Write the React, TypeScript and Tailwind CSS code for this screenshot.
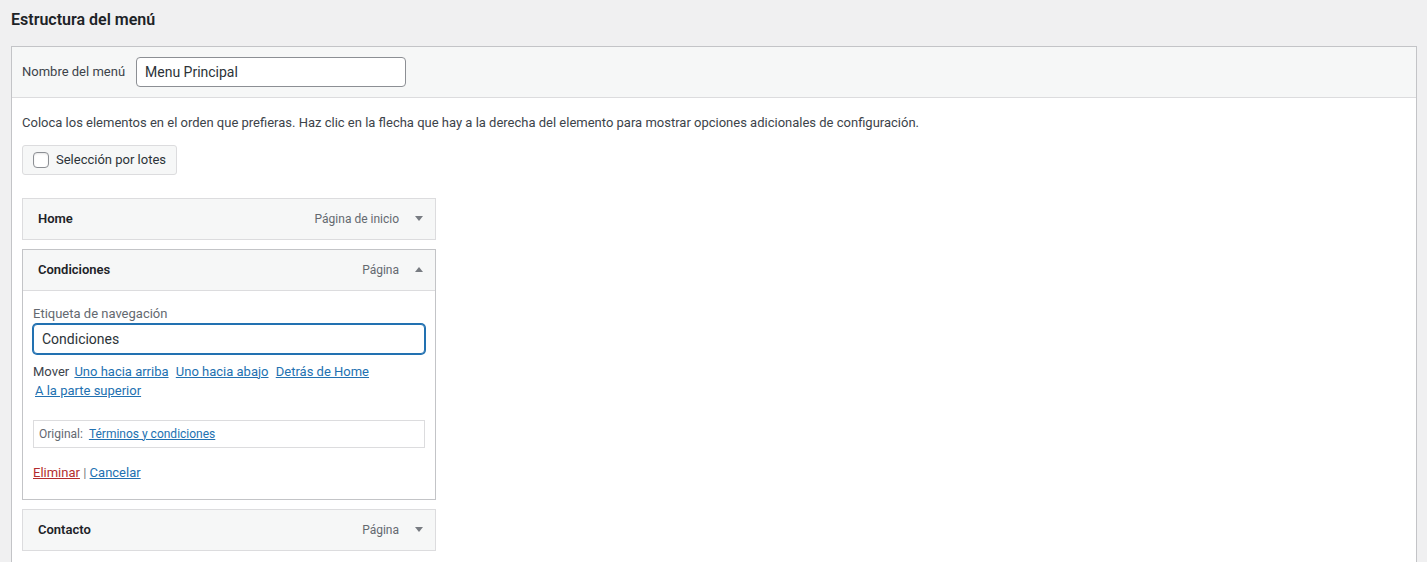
import { useState } from "react"

type Item = {
  id: string
  title: string
  type: string
}

const items: Item[] = [
  { id: "home", title: "Home", type: "Página de inicio" },
  { id: "condiciones", title: "Condiciones", type: "Página" },
  { id: "contacto", title: "Contacto", type: "Página" },
]

function Arrow({ up }: { up?: boolean }) {
  return (
    <svg width="8" height="5" viewBox="0 0 8 5" className="ml-[16px] shrink-0">
      {up ? <path d="M0 5 L4 0 L8 5 Z" fill="#787c82" /> : <path d="M0 0 L8 0 L4 5 Z" fill="#787c82" />}
    </svg>
  )
}

function ItemHeader({ item, open }: { item: Item; open: boolean }) {
  return (
    <div className="flex h-[40px] items-center justify-between pl-[15px] pr-[12px]">
      <span className="text-[13px] font-semibold text-[#1d2327]">{item.title}</span>
      <div className="flex items-center">
        <span className="text-[12px] text-[#646970]">{item.type}</span>
        <Arrow up={open} />
      </div>
    </div>
  )
}

function MoveLink({ children }: { children: React.ReactNode }) {
  return (
    <a href="#" className="mx-[2px] inline-block whitespace-nowrap text-[#2271b1] underline">
      {children}
    </a>
  )
}

function ItemSettings() {
  const [label, setLabel] = useState("Condiciones")

  return (
    <div className="px-[10px] pb-[16px] pt-[13px]">
      <label htmlFor="nav-label" className="block text-[13px] leading-[20px] text-[#646970]">
        Etiqueta de navegación
      </label>
      <input
        id="nav-label"
        value={label}
        onChange={(e) => setLabel(e.target.value)}
        className="block h-[30px] w-full rounded-[4px] border border-[#2271b1] bg-white px-[8px] text-[14px] text-[#2c3338] shadow-[0_0_0_1px_#2271b1] outline-none"
      />
      <p className="mt-[8px] text-[13px] leading-[19px] text-[#3c434a]">
        Mover <MoveLink>Uno hacia arriba</MoveLink> <MoveLink>Uno hacia abajo</MoveLink>{" "}
        <MoveLink>Detrás de Home</MoveLink> <MoveLink>A la parte superior</MoveLink>
      </p>
      <div className="mt-[20px] flex h-[28px] items-center border border-[#dcdcde] px-[5px] text-[12px] text-[#646970]">
        Original:
        <a href="#" className="ml-[6px] text-[#2271b1] underline">
          Términos y condiciones
        </a>
      </div>
      <p className="mt-[15px] text-[13px] leading-[20px] text-[#787c82]">
        <a href="#" className="text-[#b32d2e] underline">
          Eliminar
        </a>{" "}
        |{" "}
        <a href="#" className="text-[#2271b1] underline">
          Cancelar
        </a>
      </p>
    </div>
  )
}

export default function App() {
  const [menuName, setMenuName] = useState("Menu Principal")
  const [bulk, setBulk] = useState(false)
  const openId = "condiciones"

  return (
    <div className="min-h-screen bg-[#f0f0f1] pl-[11px] pr-[10px] pt-[10px] font-['Roboto',sans-serif] text-[#3c434a]">
      <h2 className="text-[16px] font-semibold leading-[20px] text-[#1d2327]">Estructura del menú</h2>

      <div className="mt-[16px] border border-[#c3c4c7] bg-white">
        <div className="flex h-[51px] items-center border-b border-[#dcdcde] bg-[#f6f7f7] px-[10px]">
          <label htmlFor="menu-name" className="w-[114px] shrink-0 text-[13px] text-[#3c434a]">
            Nombre del menú
          </label>
          <input
            id="menu-name"
            value={menuName}
            onChange={(e) => setMenuName(e.target.value)}
            className="h-[30px] w-[270px] rounded-[4px] border border-[#8c8f94] bg-white px-[8px] text-[14px] text-[#2c3338] outline-none"
          />
        </div>

        <div className="px-[10px] pb-[30px]">
          <p className="pt-[15px] text-[13px] leading-[19.5px] text-[#3c434a]">
            Coloca los elementos en el orden que prefieras. Haz clic en la flecha que hay a la derecha del elemento para
            mostrar opciones adicionales de configuración.
          </p>

          <label className="mt-[12px] inline-flex h-[30px] cursor-pointer items-center rounded-[3px] border border-[#dcdcde] bg-[#f6f7f7] pl-[10px] pr-[10px]">
            <input
              type="checkbox"
              checked={bulk}
              onChange={(e) => setBulk(e.target.checked)}
              className="h-[16px] w-[16px] appearance-none rounded-[4px] border border-[#8c8f94] bg-white shadow-[inset_0_1px_2px_rgba(0,0,0,0.1)]"
            />
            <span className="ml-[7px] text-[13px] text-[#2c3338]">Selección por lotes</span>
          </label>

          <ul className="mt-[23px] w-[414px]">
            {items.map((item, i) => {
              const open = item.id === openId
              return (
                <li
                  key={item.id}
                  className={`${i > 0 ? "mt-[9px]" : ""} border ${open ? "border-[#c3c4c7] bg-white" : "border-[#dcdcde] bg-[#f6f7f7]"}`}
                >
                  {open ? (
                    <>
                      <div className="border-b border-[#dcdcde] bg-[#f6f7f7]">
                        <ItemHeader item={item} open />
                      </div>
                      <ItemSettings />
                    </>
                  ) : (
                    <ItemHeader item={item} open={false} />
                  )}
                </li>
              )
            })}
          </ul>
        </div>
      </div>
    </div>
  )
}
